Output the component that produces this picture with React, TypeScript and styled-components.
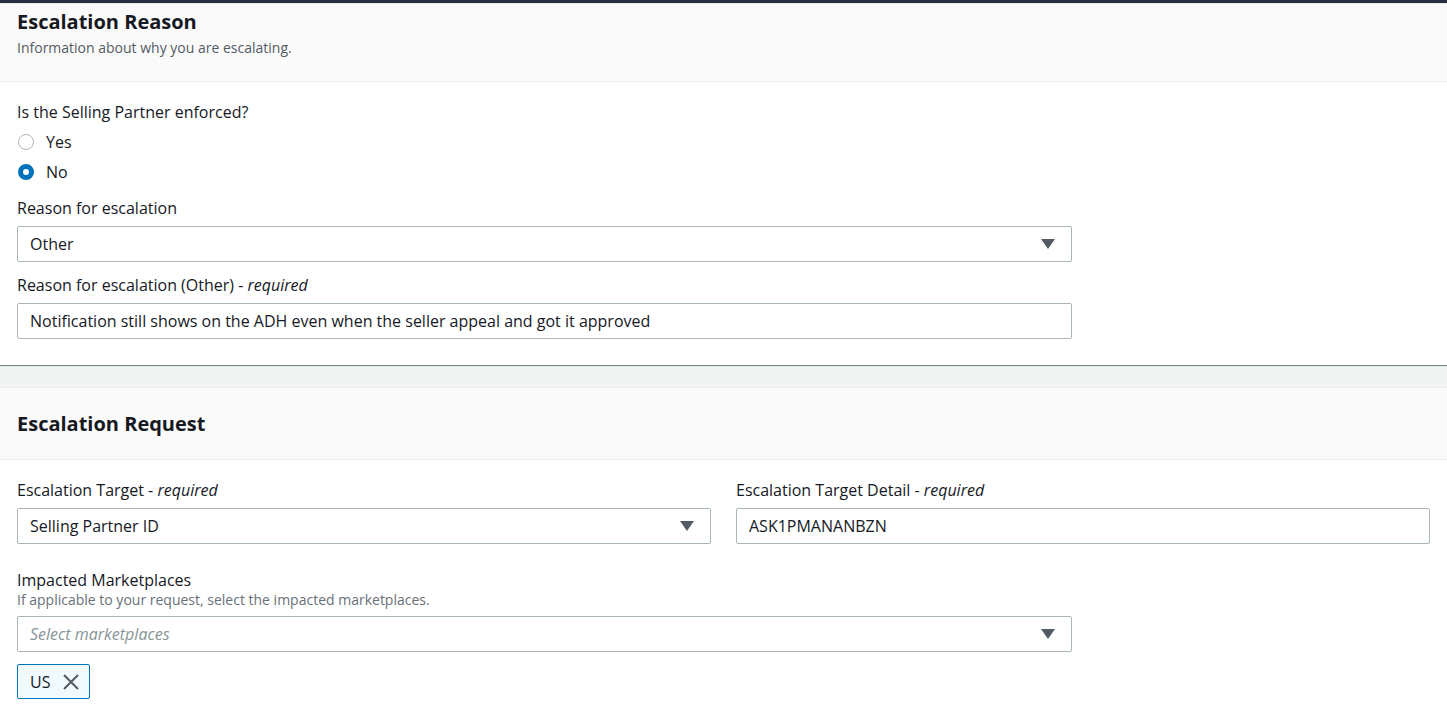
import React, { useState } from 'react';
import styled, { createGlobalStyle } from 'styled-components';

const GlobalStyle = createGlobalStyle`
  html, body {
    margin: 0;
    padding: 0;
    background: #f2f3f3;
  }
  body {
    font-family: "Open Sans", "Noto Sans", sans-serif;
    color: #16191f;
    font-size: 16px;
    line-height: 22px;
  }
  * { box-sizing: border-box; }
`;

const TopBar = styled.div`
  height: 3px;
  background: #232f3e;
`;

const Page = styled.div`
  display: flex;
  flex-direction: column;
  gap: 22px;
`;

const Card = styled.section`
  background: #fff;
  box-shadow: 0 1px 1px 0 rgba(0, 28, 36, 0.3), 0 1px 0 0 #aab7b8;
`;

const CardHeader = styled.header<{ $compact?: boolean }>`
  background: #fafafa;
  border-top: 1px solid #eaeded;
  border-bottom: 1px solid #eaeded;
  padding: ${(p) => (p.$compact ? '6px 17px 24px' : '24px 17px 23px')};
`;

const Title = styled.h2`
  margin: 0;
  font-size: 20px;
  line-height: 24px;
  font-weight: 700;
  color: #16191f;
`;

const Description = styled.p`
  margin: 5px 0 0;
  font-size: 14px;
  line-height: 18px;
  color: #545b64;
`;

const CardBody = styled.div<{ $gap?: number }>`
  padding: 19px 17px 26px;
  display: flex;
  flex-direction: column;
  gap: ${(p) => p.$gap ?? 12}px;
`;

const Field = styled.div<{ $narrow?: boolean }>`
  display: flex;
  flex-direction: column;
  width: ${(p) => (p.$narrow ? '1055px' : '100%')};
`;

const Label = styled.label`
  font-size: 16px;
  line-height: 22px;
  color: #16191f;

  em {
    font-style: italic;
  }
`;

const Hint = styled.div`
  font-size: 14px;
  line-height: 18px;
  color: #687078;
`;

const Control = styled.div<{ $placeholder?: boolean }>`
  margin-top: 7px;
  height: 36px;
  border: 1px solid #aab7b8;
  border-radius: 2px;
  background: #fff;
  display: flex;
  align-items: center;
  justify-content: space-between;
  padding: 0 16px 0 12px;
  font-size: 16px;
  color: ${(p) => (p.$placeholder ? '#879596' : '#16191f')};
  font-style: ${(p) => (p.$placeholder ? 'italic' : 'normal')};
  cursor: pointer;
`;

const Caret = styled.span`
  width: 0;
  height: 0;
  border-left: 7px solid transparent;
  border-right: 7px solid transparent;
  border-top: 10px solid #545b64;
`;

const RadioGroup = styled.div`
  display: flex;
  flex-direction: column;
  margin-top: 4px;
  margin-bottom: -2px;
`;

const RadioRow = styled.label`
  display: flex;
  align-items: center;
  height: 30px;
  gap: 12px;
  cursor: pointer;
  font-size: 16px;
`;

const RadioDot = styled.span<{ $checked: boolean }>`
  width: 16px;
  height: 16px;
  margin-left: 1px;
  border-radius: 50%;
  border: ${(p) => (p.$checked ? '5px solid #0073bb' : '1px solid #aab7b8')};
  background: #fff;
`;

const Columns = styled.div`
  display: grid;
  grid-template-columns: 1fr 1fr;
  gap: 25px;
`;

const Token = styled.div`
  margin-top: 12px;
  align-self: flex-start;
  display: flex;
  align-items: center;
  gap: 12px;
  height: 35px;
  padding: 0 9px 0 12px;
  border: 1px solid #0073bb;
  border-radius: 2px;
  background: #f1faff;
  font-size: 16px;
`;

const Remove = styled.button`
  border: 0;
  background: none;
  padding: 0;
  display: flex;
  cursor: pointer;
`;

function Required() {
  return (
    <>
      {' - '}
      <em>required</em>
    </>
  );
}

function App() {
  const [enforced, setEnforced] = useState('no');

  return (
    <>
      <GlobalStyle />
      <TopBar />
      <Page>
        <Card>
          <CardHeader $compact>
            <Title>Escalation Reason</Title>
            <Description>Information about why you are escalating.</Description>
          </CardHeader>
          <CardBody>
            <Field>
              <Label>Is the Selling Partner enforced?</Label>
              <RadioGroup>
                {['Yes', 'No'].map((o) => (
                  <RadioRow key={o} onClick={() => setEnforced(o.toLowerCase())}>
                    <RadioDot $checked={enforced === o.toLowerCase()} />
                    {o}
                  </RadioRow>
                ))}
              </RadioGroup>
            </Field>
            <Field $narrow>
              <Label>Reason for escalation</Label>
              <Control>
                Other
                <Caret />
              </Control>
            </Field>
            <Field $narrow>
              <Label>
                Reason for escalation (Other)
                <Required />
              </Label>
              <Control>Notification still shows on the ADH even when the seller appeal and got it approved</Control>
            </Field>
          </CardBody>
        </Card>

        <Card>
          <CardHeader>
            <Title>Escalation Request</Title>
          </CardHeader>
          <CardBody $gap={25}>
            <Columns>
              <Field>
                <Label>
                  Escalation Target
                  <Required />
                </Label>
                <Control>
                  Selling Partner ID
                  <Caret />
                </Control>
              </Field>
              <Field>
                <Label>
                  Escalation Target Detail
                  <Required />
                </Label>
                <Control>ASK1PMANANBZN</Control>
              </Field>
            </Columns>
            <Field $narrow>
              <Label>Impacted Marketplaces</Label>
              <Hint>If applicable to your request, select the impacted marketplaces.</Hint>
              <Control $placeholder>
                Select marketplaces
                <Caret />
              </Control>
              <Token>
                US
                <Remove aria-label="Remove US">
                  <svg width="18" height="18" viewBox="0 0 18 18">
                    <path d="M2 2 L16 16 M16 2 L2 16" stroke="#545b64" strokeWidth="2" fill="none" />
                  </svg>
                </Remove>
              </Token>
            </Field>
          </CardBody>
        </Card>
      </Page>
    </>
  );
}

export default App;
